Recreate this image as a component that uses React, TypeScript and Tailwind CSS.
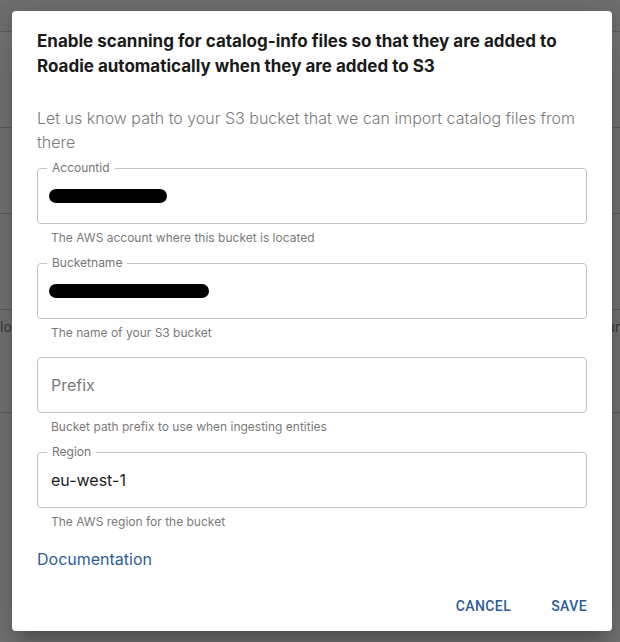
import React from "react";

const font = { fontFamily: "Inter, 'Noto Sans', sans-serif" };
const roboto = { fontFamily: "Roboto, 'Liberation Sans', sans-serif" };

function Field({
  label,
  value,
  placeholder,
  helper,
  redact,
}: {
  label?: string;
  value?: string;
  placeholder?: string;
  helper: string;
  redact?: number;
}) {
  return (
    <div className="flex flex-col">
      <div className="relative h-[56px] rounded-[4px] border border-[#c4c4c4]">
        {label && (
          <span className="absolute left-[9px] top-[-9px] bg-white px-[5px] text-[12px] leading-[16px] text-[#757575]">
            {label}
          </span>
        )}
        <div className={`flex h-full items-center text-[16px] ${redact ? "px-[11px]" : "px-[13px]"}`}>
          {redact ? (
            <div className="h-[14px] rounded-full bg-black" style={{ width: redact }} />
          ) : value ? (
            <span className="text-[#1d1d1d]">{value}</span>
          ) : (
            <span className="text-[#7a7a7a]">{placeholder}</span>
          )}
        </div>
      </div>
      <div className="mt-[5px] px-[14px] text-[12px] leading-[18px] text-[#7a7a7a]">{helper}</div>
    </div>
  );
}

export default function App() {
  return (
    <div className="relative h-[642px] w-[620px] overflow-hidden bg-[#777777]" style={font}>
      <div className="flex flex-col">
        <div className="h-[32px] border-b border-[#5f5f5f] bg-[#707070]" />
        <div className="h-[96px] border-b border-[#5f5f5f]" />
        <div className="h-[86px] border-b border-[#5f5f5f]" />
        <div className="h-[96px] border-b border-[#5f5f5f]" />
        <div className="flex h-[103px] justify-between border-b border-[#5f5f5f] pt-[6px] text-[14px] text-[#3a3a3a]">
          <span>lo</span>
          <span>ur</span>
        </div>
      </div>
      <div className="absolute left-[12px] top-[11px] flex h-[620px] w-[600px] flex-col rounded-[4px] bg-white px-[25px] shadow-[0_11px_15px_-7px_rgba(0,0,0,0.2),0_24px_38px_3px_rgba(0,0,0,0.14),0_9px_46px_8px_rgba(0,0,0,0.12)]">
        <h2 className="mt-[18px] text-[17px] font-bold leading-[25px] text-[#1a1a1a]">
          Enable scanning for catalog-info files so that they are added to Roadie automatically when they are added to S3
        </h2>
        <p className="mt-[27px] text-[16px] font-light leading-[24px] text-[#7a7a7a]">
          Let us know path to your S3 bucket that we can import catalog files from there
        </p>
        <div className="mt-[14px] flex flex-col gap-[15.7px]">
          <Field label="Accountid" helper="The AWS account where this bucket is located" redact={118} />
          <Field label="Bucketname" helper="The name of your S3 bucket" redact={160} />
          <Field placeholder="Prefix" helper="Bucket path prefix to use when ingesting entities" />
          <Field label="Region" value="eu-west-1" helper="The AWS region for the bucket" />
        </div>
        <a className="mt-[16px] self-start text-[16px] leading-[24px] text-[#2c5d97]">Documentation</a>
        <div className="mt-[25px] flex justify-end gap-[40px]" style={roboto}>
          <button className="text-[14px] font-medium uppercase tracking-[0.03em] text-[#2c5d97]">Cancel</button>
          <button className="text-[14px] font-medium uppercase tracking-[0.03em] text-[#2c5d97]">Save</button>
        </div>
      </div>
    </div>
  );
}
